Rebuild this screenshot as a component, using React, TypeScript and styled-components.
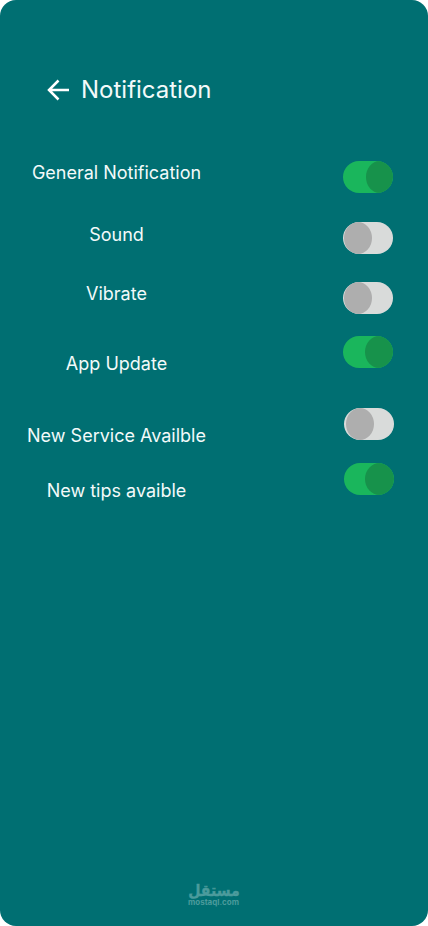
import React, { useState } from "react";
import styled, { createGlobalStyle } from "styled-components";

const GlobalStyle = createGlobalStyle`
  * { box-sizing: border-box; }
  body { margin: 0; background: #fff; }
`;

const Screen = styled.main`
  width: 428px;
  height: 926px;
  display: flex;
  flex-direction: column;
  overflow: hidden;
  border-radius: 16px;
  background: #006f72;
  color: #f3fafa;
  font-family: Inter, sans-serif;
`;

const Header = styled.header`
  display: flex;
  align-items: center;
  gap: 11px;
  height: 30px;
  margin: 75px 0 56px 47px;
`;

const BackButton = styled.button`
  display: flex;
  padding: 0;
  border: 0;
  background: none;
  color: #fff;
`;

const Title = styled.h1`
  margin: 0;
  font-size: 24px;
  font-weight: 400;
  line-height: 30px;
  white-space: nowrap;
`;

const List = styled.section`
  display: flex;
  flex-direction: column;
`;

const Row = styled.div<{ $height: number; $inset: number }>`
  display: flex;
  align-items: flex-start;
  justify-content: space-between;
  height: ${(p) => p.$height}px;
  padding-right: ${(p) => p.$inset}px;
`;

const Label = styled.span<{ $drop: number }>`
  width: 233px;
  padding-top: ${(p) => p.$drop}px;
  font-size: 18px;
  line-height: 22px;
  text-align: center;
  white-space: nowrap;
`;

const Track = styled.button<{ $on: boolean; $gap: number }>`
  display: flex;
  justify-content: ${(p) => (p.$on ? "flex-end" : "flex-start")};
  width: 50px;
  height: 32px;
  padding: 0 0 0 ${(p) => (p.$on ? 0 : p.$gap)}px;
  border: 0;
  border-radius: 16px;
  overflow: hidden;
  background: ${(p) => (p.$on ? "#1ab65c" : "#d9dbda")};
`;

const Knob = styled.span<{ $on: boolean; $width: number }>`
  width: ${(p) => p.$width}px;
  height: 32px;
  border-radius: 50%;
  background: ${(p) => (p.$on ? "#17924b" : "#aeaeae")};
`;

const Footer = styled.footer`
  display: flex;
  justify-content: center;
  margin-top: auto;
  height: 48px;
`;

const items = [
  { label: "General Notification", on: true, height: 61, drop: 1, inset: 35, knob: 27, gap: 0 },
  { label: "Sound", on: false, height: 60, drop: 2, inset: 35, knob: 28, gap: 1 },
  { label: "Vibrate", on: false, height: 54, drop: 1, inset: 35, knob: 28, gap: 1 },
  { label: "App Update", on: true, height: 72, drop: 17, inset: 35, knob: 28, gap: 0 },
  { label: "New Service Availble", on: false, height: 55, drop: 17, inset: 34, knob: 28, gap: 2 },
  { label: "New tips avaible", on: true, height: 55, drop: 17, inset: 34, knob: 29, gap: 0 },
];

export default function App() {
  const [states, setStates] = useState(items.map((i) => i.on));
  const toggle = (n: number) => setStates((s) => s.map((v, i) => (i === n ? !v : v)));

  return (
    <>
      <GlobalStyle />
      <Screen>
        <Header>
          <BackButton aria-label="Back">
            <svg width="23" height="22" viewBox="0 0 23 22" fill="none" stroke="currentColor" strokeWidth="2.5">
              <path d="M22 11H2.3M11.5 1.5L2 11l9.5 9.5" />
            </svg>
          </BackButton>
          <Title>Notification</Title>
        </Header>
        <List>
          {items.map((item, n) => (
            <Row key={item.label} $height={item.height} $inset={item.inset}>
              <Label $drop={item.drop}>{item.label}</Label>
              <Track
                role="switch"
                aria-checked={states[n]}
                aria-label={item.label}
                $on={states[n]}
                $gap={item.gap}
                onClick={() => toggle(n)}
              >
                <Knob $on={states[n]} $width={item.knob} />
              </Track>
            </Row>
          ))}
        </List>
        <Footer>
          <svg width="54" height="32" viewBox="0 0 54 32" overflow="visible" fill="#4b9b9c">
            <text transform="translate(27 18) scale(0.88 1)" textAnchor="middle" direction="rtl" fontFamily="DejaVu Sans, sans-serif" fontWeight="700" fontSize="16" stroke="#4b9b9c" strokeWidth="0.4">مستقل</text>
            <text x="1" y="27" fontFamily="Inter, sans-serif" fontWeight="700" fontSize="8" textLength="51" lengthAdjust="spacingAndGlyphs">mostaql.com</text>
          </svg>
        </Footer>
      </Screen>
    </>
  );
}
